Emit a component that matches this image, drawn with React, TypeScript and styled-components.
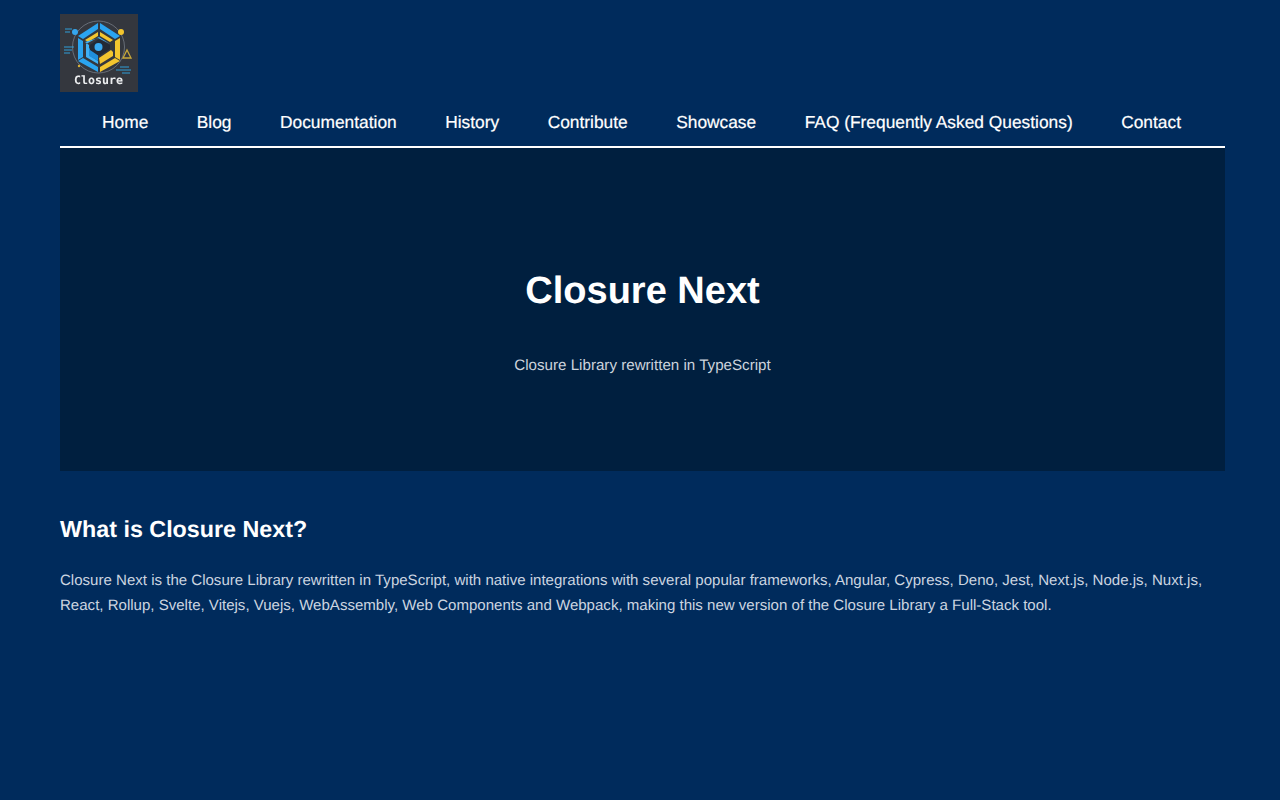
import React from "react";
import styled, { createGlobalStyle } from "styled-components";

const Global = createGlobalStyle`
  html, body { margin: 0; padding: 0; }
  body {
    background: #002b5c;
    min-height: 800px;
    font-family: "Liberation Sans", Arial, sans-serif;
    color: #fff;
    text-rendering: geometricPrecision;
  }
`;

const Page = styled.div`
  width: 1165px;
  margin-left: 60px;
  padding-top: 14px;
`;

const Logo = styled.a`
  display: block;
  width: 78px;
  height: 78px;
  background: #33373f;
  line-height: 0;
`;

const Nav = styled.nav`
  display: flex;
  justify-content: center;
  gap: 48.5px;
  align-items: center;
  border-bottom: 2px solid #fff;
  box-sizing: border-box;
  height: 56px;
  padding-top: 7px;
  padding-right: 2px;
`;

const NavLink = styled.a`
  font-size: 17.35px;
  font-weight: 500;
  color: #fff;
  white-space: nowrap;
  -webkit-text-stroke: 0.2px #fff;
`;

const Hero = styled.header`
  background: #001f3f;
  height: 323px;
  display: flex;
  flex-direction: column;
  align-items: center;
  padding-top: 121px;
  box-sizing: border-box;
`;

const HeroTitle = styled.h1`
  margin: 0;
  font-size: 38px;
  line-height: 44px;
  font-weight: 700;
`;

const HeroText = styled.p`
  margin: 41px 0 0;
  font-size: 15.15px;
  line-height: 24px;
  color: #ccd3dc;
`;

const Section = styled.section`
  padding-top: 44px;
`;

const Heading = styled.h2`
  margin: 0;
  font-size: 23.3px;
  line-height: 28px;
  font-weight: 700;
`;

const Body = styled.p`
  margin: 26px 0 0;
  font-size: 15.05px;
  line-height: 24.5px;
  color: #ccd5e0;
`;

const LogoArt = () => (
  <svg width="78" height="78" viewBox="0 0 78 78">
    <rect width="78" height="78" fill="#34373e" />
    <g style={{ filter: "blur(0.35px)" }}>
      <circle cx="38.5" cy="33" r="26" fill="none" stroke="#767c86" strokeWidth="0.8" />
      <polygon points="38,9 38,15 23,25 18,22" fill="#2aa4f0" />
      <polygon points="40,9 40,15 55,25 60,22" fill="#2aa4f0" />
      <polygon points="38,18 38,22 28,28 25,26" fill="#f3c52e" />
      <polygon points="40,18 40,22 50,28 53,26" fill="#f3c52e" />
      <polygon points="18,24 23,27 23,43 18,46" fill="#2aa4f0" />
      <polygon points="60,24 55,27 55,43 60,46" fill="#f3c52e" />
      <polygon points="25,28 38,24 50,30 39,23 26,30 26,43 38,50 38,47 29,41 29,31" fill="#3fb0f5" />
      <polygon points="18,47 23,44 38,53 38,58" fill="#2aa4f0" />
      <polygon points="60,47 55,44 40,53 40,58" fill="#f3c52e" />
      <polygon points="39,44 51,36 53,38 53,42 40,50" fill="#f3c52e" />
      <polygon points="29,34 38,41 38,47 29,42" fill="#1f8fdc" />
      <polygon points="30,31 39,25 50,31 50,35 39,42 30,36" fill="#232a35" />
      <circle cx="38.5" cy="33" r="4" fill="#38aaf2" />
      <circle cx="15" cy="18" r="3" fill="#35a6ee" />
      <circle cx="61" cy="18" r="3" fill="#f3c52e" />
      <path d="M5 15h7M5 18h5M4 33h10M4 36h8M4 39h6M60 53h9M56 56h15M62 59h8" stroke="#2f9fd8" strokeWidth="1" />
      <path d="M67 36l4 8h-8z" fill="none" stroke="#c8a93a" strokeWidth="1.3" />
      <circle cx="19" cy="52" r="1.2" fill="#d9b23a" />
      <text x="38.5" y="69.5" textAnchor="middle" fontFamily="'DejaVu Sans Mono', monospace" fontWeight="700" fontSize="11.6" fill="#eceef0">Closure</text>
    </g>
  </svg>
);

const links = ["Home", "Blog", "Documentation", "History", "Contribute", "Showcase", "FAQ (Frequently Asked Questions)", "Contact"];

export default function App() {
  return (
    <Page>
      <Global />
      <Logo><LogoArt /></Logo>
      <Nav>
        {links.map((l) => <NavLink key={l}>{l}</NavLink>)}
      </Nav>
      <Hero>
        <HeroTitle>Closure Next</HeroTitle>
        <HeroText>Closure Library rewritten in TypeScript</HeroText>
      </Hero>
      <Section>
        <Heading>What is Closure Next?</Heading>
        <Body>
          Closure Next is the Closure Library rewritten in TypeScript, with native integrations with several popular frameworks, Angular, Cypress, Deno, Jest, Next.js, Node.js, Nuxt.js, React, Rollup, Svelte, Vitejs, Vuejs, WebAssembly, Web Components and Webpack, making this new version of the Closure Library a Full-Stack tool.
        </Body>
      </Section>
    </Page>
  );
}
